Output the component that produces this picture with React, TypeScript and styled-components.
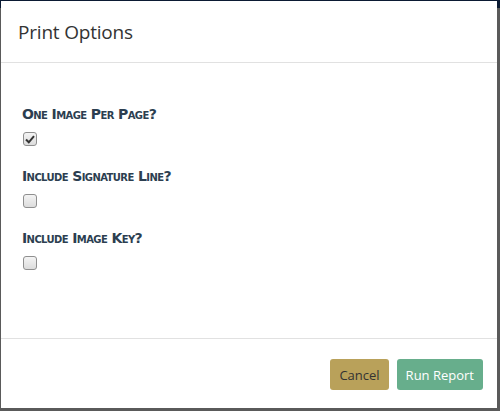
import React from "react";
import styled, { createGlobalStyle } from "styled-components";

const Global = createGlobalStyle`
  html, body { margin: 0; padding: 0; }
  body { background: #3a3d44; width: 500px; height: 411px; overflow: hidden; }
  #root { height: 411px; }
`;

const Backdrop = styled.div`
  height: 411px;
  box-sizing: border-box;
  padding: 1px 3px 3px 1px;
  background: linear-gradient(#0b1a33 0 8px, #5a5a5a 8px);
  display: flex;
`;

const Modal = styled.div`
  flex: 1;
  background: #fff;
  display: flex;
  flex-direction: column;
`;

const Header = styled.div`
  height: 62px;
  box-sizing: border-box;
  border-bottom: 1px solid #e1e1e1;
  padding: 0 17px;
  display: flex;
  align-items: center;
`;

const Title = styled.h4`
  margin: 0;
  font-family: "Open Sans", sans-serif;
  font-weight: 400;
  font-size: 19px;
  color: #333;
  letter-spacing: -0.2px;
`;

const Body = styled.div`
  flex: 1;
  padding: 43px 21px 0;
  display: flex;
  flex-direction: column;
`;

const Field = styled.div`
  display: flex;
  flex-direction: column;
  margin-bottom: 22px;
`;

const Label = styled.label`
  font-family: "DejaVu Sans", Verdana, sans-serif;
  font-weight: 700;
  font-variant: small-caps;
  font-size: 14px;
  line-height: 16px;
  color: #2c3e50;
  letter-spacing: -0.6px;
`;

const Box = styled.span<{ $checked?: boolean }>`
  margin-top: 10px;
  margin-left: 1px;
  width: 14px;
  height: 14px;
  box-sizing: border-box;
  border: 1px solid #8f8f8f;
  border-radius: 3px;
  background: linear-gradient(#f4f4f4, #dcdcdc);
  display: flex;
  align-items: center;
  justify-content: center;
`;

const Footer = styled.div`
  height: 70px;
  box-sizing: border-box;
  border-top: 1px solid #e1e1e1;
  padding: 20px 14px 0;
  display: flex;
  justify-content: flex-end;
  align-items: flex-start;
  gap: 8px;
`;

const Button = styled.button<{ $variant: "cancel" | "run" }>`
  height: 31px;
  padding: 0 9px;
  border: none;
  border-radius: 3px;
  font-family: "Open Sans", sans-serif;
  font-size: 13px;
  background: ${(p) => (p.$variant === "cancel" ? "#b9a15a" : "#67ae8c")};
  color: ${(p) => (p.$variant === "cancel" ? "#333" : "#fff")};
  cursor: pointer;
`;

const Check = () => (
  <svg width="10" height="9" viewBox="0 0 10 9">
    <path d="M1 4.5 L3.8 7.3 L9 1.2" fill="none" stroke="#333" strokeWidth="2" />
  </svg>
);

export default function App() {
  const fields = [
    { label: "One Image Per Page?", checked: true },
    { label: "Include Signature Line?", checked: false },
    { label: "Include Image Key?", checked: false },
  ];
  return (
    <>
      <Global />
      <Backdrop>
        <Modal>
          <Header>
            <Title>Print Options</Title>
          </Header>
          <Body>
            {fields.map((f) => (
              <Field key={f.label}>
                <Label>{f.label}</Label>
                <Box $checked={f.checked}>{f.checked && <Check />}</Box>
              </Field>
            ))}
          </Body>
          <Footer>
            <Button $variant="cancel">Cancel</Button>
            <Button $variant="run">Run Report</Button>
          </Footer>
        </Modal>
      </Backdrop>
    </>
  );
}
